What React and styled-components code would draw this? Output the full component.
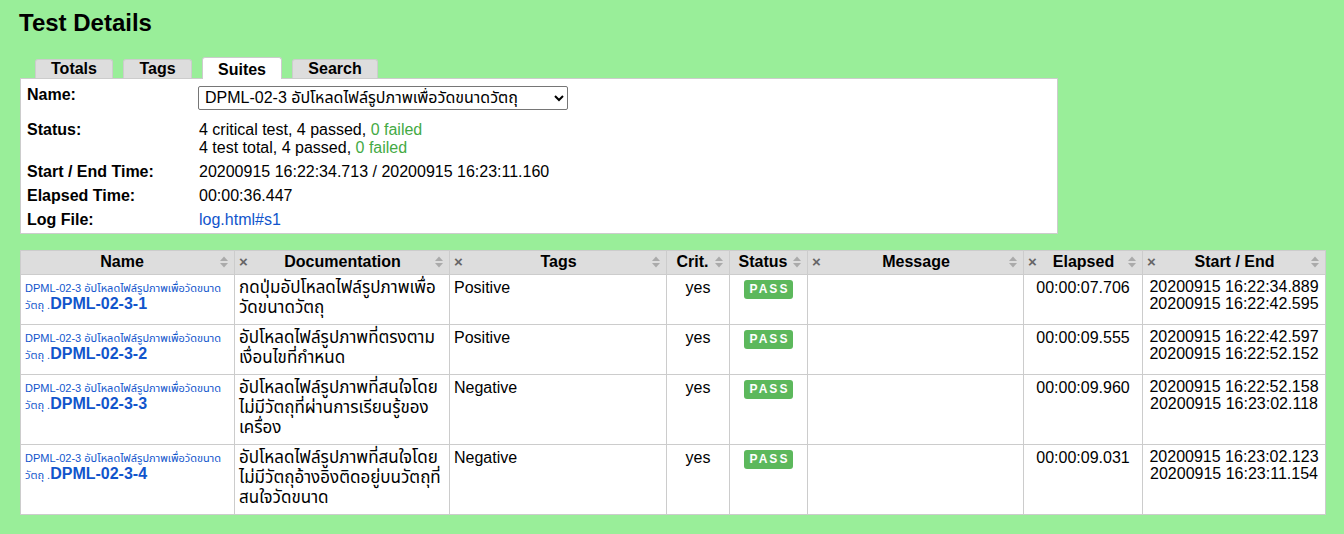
import React from 'react';
import styled, { createGlobalStyle } from 'styled-components';

const Global = createGlobalStyle`
  html, body { margin: 0; padding: 0; background: #99ee99; }
  body {
    font-family: "Liberation Sans", Arial, "Noto Sans Thai", Tahoma, sans-serif;
    font-size: 16px;
    color: #000;
  }
`;

const Page = styled.div`
  padding: 9px 19px 20px 20px;
`;

const Title = styled.h2`
  margin: 0 0 20px -1px;
  font-size: 24px;
  line-height: 27.6px;
  font-weight: bold;
`;

const TabBar = styled.div`
  display: flex;
  align-items: flex-end;
  gap: 10px;
  margin-left: 15px;
  position: relative;
  z-index: 1;
`;

const Tab = styled.div`
  box-sizing: border-box;
  width: ${p => p.$w}px;
  text-align: center;
  background: ${p => (p.$active ? '#fff' : '#ddd')};
  border: 1px solid #ccc;
  border-bottom: none;
  border-radius: 3px 3px 0 0;
  font-weight: bold;
  font-size: 16px;
  height: ${p => (p.$active ? '22px' : '19px')};
  line-height: ${p => (p.$active ? '23px' : '17px')};
  margin-bottom: ${p => (p.$active ? '-1px' : '0')};
`;

const Panel = styled.div`
  width: 1038px;
  box-sizing: border-box;
  background: #fff;
  border: 1px solid #ccc;
  padding: 3px 0 0 0;
`;

const DetailsTable = styled.table`
  border-spacing: 2px;
`;

const Label = styled.th`
  text-align: left;
  vertical-align: top;
  font-weight: bold;
  width: 162px;
  padding: 2px 4px;
  white-space: nowrap;
`;

const Value = styled.td`
  padding: 2px 4px;
  vertical-align: top;
`;

const Select = styled.select`
  display: block;
  width: 370px;
  height: 24px;
  margin: 0 0 5px -1px;
  font-family: inherit;
  font-size: 16px;
  color: #000;
  background: #fff;
  border: 1px solid #767676;
  border-radius: 2px;
  padding: 0 2px;
`;

const PassText = styled.span`
  color: #44aa44;
`;

const Link = styled.a`
  color: #1155cc;
  text-decoration: none;
`;

const TestTable = styled.table`
  margin-top: 16px;
  width: 1305px;
  table-layout: fixed;
  border-collapse: collapse;
  background: #fff;
`;

const Col = styled.col`
  width: ${p => p.$w}px;
`;

const Head = styled.th`
  background: #ddd;
  border: 1px solid #ccc;
  padding: 2px 5px 3px 4px;
  font-weight: bold;
  font-size: 16px;
  line-height: 18px;
`;

const HeadInner = styled.div`
  display: flex;
  align-items: center;
`;

const HeadLabel = styled.span`
  flex: 1;
  text-align: center;
  white-space: nowrap;
`;

const Close = styled.span`
  width: 12px;
  color: #666;
  font-size: 15px;
  font-weight: bold;
  text-align: left;
  line-height: 14px;
`;

const SortWrap = styled.span`
  display: flex;
  width: 10px;
  justify-content: flex-end;
`;

const Cell = styled.td`
  border: 1px solid #ccc;
  padding: 3px 4px 6px;
  vertical-align: top;
  line-height: 20px;
  font-size: ${p => p.$size || 16}px;
  text-align: ${p => p.$align || 'left'};
`;

const NameCell = styled.td`
  border: 1px solid #ccc;
  padding: 4px 4px 4px;
  vertical-align: top;
  line-height: 16px;
`;

const ParentName = styled.a`
  color: #1155cc;
  font-size: 11px;
  text-decoration: none;
`;

const TestName = styled.a`
  color: #1155cc;
  font-weight: bold;
  font-size: 16px;
  text-decoration: none;
`;

const TimeCell = styled.td`
  border: 1px solid #ccc;
  padding: 3px 4px 4px;
  vertical-align: top;
  line-height: 17.5px;
  text-align: center;
  white-space: nowrap;
`;

const Badge = styled.span`
  display: inline-block;
  background: #5cb85c;
  color: #fff;
  font-weight: bold;
  font-size: 12px;
  line-height: 15px;
  letter-spacing: 2px;
  padding: 2px 4px 2px 6px;
  border-radius: 3px;
  margin-top: 2px;
`;

const SortIcon = () => (
  <svg width="10" height="14" viewBox="0 0 10 14">
    <polygon points="1,6 5,1.5 9,6" fill="#aaa" />
    <polygon points="1,8 9,8 5,12.5" fill="#aaa" />
  </svg>
);

const tabs = [
  { name: 'Totals', w: 78 },
  { name: 'Tags', w: 69 },
  { name: 'Suites', w: 80, active: true },
  { name: 'Search', w: 86 },
];

const columns = [
  { name: 'Name', w: 214, close: false },
  { name: 'Documentation', w: 215, close: true },
  { name: 'Tags', w: 217, close: true },
  { name: 'Crit.', w: 63, close: false },
  { name: 'Status', w: 78, close: false },
  { name: 'Message', w: 216, close: true },
  { name: 'Elapsed', w: 119, close: true },
  { name: 'Start / End', w: 183, close: true },
];

const PARENT = 'DPML-02-3 อัปโหลดไฟล์รูปภาพเพื่อวัดขนาดวัตถุ';

const rows = [
  {
    id: 'DPML-02-3-1',
    doc: 'กดปุ่มอัปโหลดไฟล์รูปภาพเพื่อวัดขนาดวัตถุ',
    tag: 'Positive',
    elapsed: '00:00:07.706',
    start: '20200915 16:22:34.889',
    end: '20200915 16:22:42.595',
  },
  {
    id: 'DPML-02-3-2',
    doc: 'อัปโหลดไฟล์รูปภาพที่ตรงตามเงื่อนไขที่กำหนด',
    tag: 'Positive',
    elapsed: '00:00:09.555',
    start: '20200915 16:22:42.597',
    end: '20200915 16:22:52.152',
  },
  {
    id: 'DPML-02-3-3',
    doc: 'อัปโหลดไฟล์รูปภาพที่สนใจโดยไม่มีวัตถุที่ผ่านการเรียนรู้ของเครื่อง',
    tag: 'Negative',
    elapsed: '00:00:09.960',
    start: '20200915 16:22:52.158',
    end: '20200915 16:23:02.118',
  },
  {
    id: 'DPML-02-3-4',
    doc: 'อัปโหลดไฟล์รูปภาพที่สนใจโดยไม่มีวัตถุอ้างอิงติดอยู่บนวัตถุที่สนใจวัดขนาด',
    tag: 'Negative',
    elapsed: '00:00:09.031',
    start: '20200915 16:23:02.123',
    end: '20200915 16:23:11.154',
  },
];

export default function App() {
  return (
    <Page>
      <Global />
      <Title>Test Details</Title>
      <TabBar>
        {tabs.map(t => (
          <Tab key={t.name} $w={t.w} $active={t.active}>
            {t.name}
          </Tab>
        ))}
      </TabBar>
      <Panel>
        <DetailsTable>
          <tbody>
            <tr>
              <Label>Name:</Label>
              <Value>
                <Select defaultValue="s1">
                  <option value="s1">{PARENT}</option>
                </Select>
              </Value>
            </tr>
            <tr>
              <Label>Status:</Label>
              <Value>
                4 critical test, 4 passed, <PassText>0 failed</PassText>
                <br />
                4 test total, 4 passed, <PassText>0 failed</PassText>
              </Value>
            </tr>
            <tr>
              <Label>Start / End Time:</Label>
              <Value>20200915 16:22:34.713 / 20200915 16:23:11.160</Value>
            </tr>
            <tr>
              <Label>Elapsed Time:</Label>
              <Value>00:00:36.447</Value>
            </tr>
            <tr>
              <Label>Log File:</Label>
              <Value>
                <Link href="#s1">log.html#s1</Link>
              </Value>
            </tr>
          </tbody>
        </DetailsTable>
      </Panel>

      <TestTable>
        <colgroup>
          {columns.map(c => (
            <Col key={c.name} $w={c.w} />
          ))}
        </colgroup>
        <thead>
          <tr>
            {columns.map(c => (
              <Head key={c.name}>
                <HeadInner>
                  {c.close && <Close>×</Close>}
                  <HeadLabel>{c.name}</HeadLabel>
                  <SortWrap>
                    <SortIcon />
                  </SortWrap>
                </HeadInner>
              </Head>
            ))}
          </tr>
        </thead>
        <tbody>
          {rows.map(r => (
            <tr key={r.id}>
              <NameCell>
                <ParentName href="#">{PARENT}&nbsp;.</ParentName>
                <TestName href="#">{r.id}</TestName>
              </NameCell>
              <Cell $size={17}>{r.doc}</Cell>
              <Cell>{r.tag}</Cell>
              <Cell $align="center">yes</Cell>
              <Cell $align="center">
                <Badge>PASS</Badge>
              </Cell>
              <Cell />
              <Cell $align="center">{r.elapsed}</Cell>
              <TimeCell>
                {r.start}
                <br />
                {r.end}
              </TimeCell>
            </tr>
          ))}
        </tbody>
      </TestTable>
    </Page>
  );
}
